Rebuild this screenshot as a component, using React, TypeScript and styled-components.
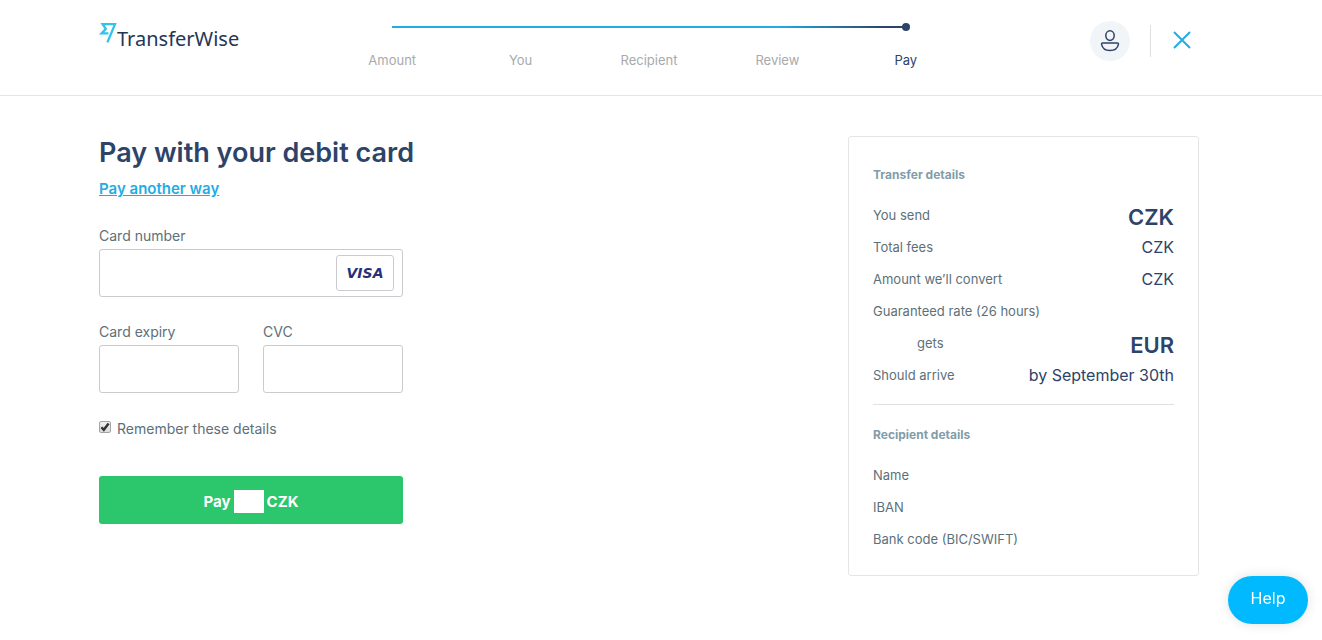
import React, { useState } from "react";
import styled, { createGlobalStyle } from "styled-components";

const color = {
  navy: "#2e4369",
  blue: "#1fade3",
  bright: "#00b9ff",
  green: "#2cc66d",
  grey: "#5d7079",
  muted: "#a8aaac",
  teal: "#829ca9",
  line: "#e2e6e8",
  field: "#c9cbce",
};

const GlobalStyle = createGlobalStyle`
  *, *::before, *::after { box-sizing: border-box; }
  body {
    margin: 0;
    background: #fff;
    color: ${color.navy};
    font-family: Inter, "Liberation Sans", sans-serif;
    font-size: 14px;
    line-height: 24px;
  }
  h1, h2, dl, dd, ol { margin: 0; padding: 0; }
  button, input { font-family: inherit; }
`;

const Gutter = styled.div`
  padding: 0 36px 0 12px;
`;

const Container = styled.div`
  max-width: 1100px;
  margin: 0 auto;
`;

const Header = styled.header`
  border-bottom: 1px solid ${color.line};
`;

const HeaderRow = styled(Container)`
  display: grid;
  grid-template-columns: 1fr minmax(0, 642px) 1fr;
  min-height: 95px;
`;

const Logo = styled.a`
  display: flex;
  align-items: flex-start;
  height: 32px;
  margin-top: 22px;
  color: #253655;
  text-decoration: none;
`;

const LogoName = styled.span`
  margin-top: 5px;
  font-family: "Noto Sans", "Open Sans", sans-serif;
  font-size: 20px;
`;

const Stepper = styled.nav`
  padding-top: 23px;
`;

const Track = styled.div`
  display: flex;
  align-items: center;
  justify-content: flex-end;
  height: 8px;
  margin: 0 10%;
  background: linear-gradient(90deg, ${color.blue} 75%, ${color.navy} 96%) center / 100% 2px no-repeat;
`;

const TrackDot = styled.span`
  width: 8px;
  height: 8px;
  margin-right: -4px;
  border-radius: 50%;
  background: ${color.navy};
`;

const Steps = styled.ol`
  display: grid;
  grid-template-columns: repeat(5, 1fr);
  margin-top: 17px;
  list-style: none;
`;

const Step = styled.li<{ $current?: boolean }>`
  color: ${(p) => (p.$current ? color.navy : color.muted)};
  font-size: 13px;
  text-align: center;
`;

const Actions = styled.div`
  display: flex;
  align-items: center;
  justify-content: flex-end;
  height: 40px;
  margin-top: 21px;
`;

const UserButton = styled.button`
  display: grid;
  place-items: center;
  width: 40px;
  height: 40px;
  padding: 0;
  border: 0;
  border-radius: 50%;
  background: #f2f5f7;
`;

const Separator = styled.span`
  width: 1px;
  height: 32px;
  margin: 0 14px 0 20px;
  background: #dcdfe2;
`;

const CloseButton = styled.button`
  display: grid;
  place-items: center;
  width: 34px;
  height: 34px;
  padding: 0 0 2px;
  border: 0;
  background: none;
`;

const Page = styled(Container)`
  display: flex;
  flex-wrap: wrap;
  justify-content: space-between;
  gap: 24px;
  padding: 40px 0;
`;

const Form = styled.form`
  display: flex;
  flex-direction: column;
  width: 304px;
`;

const Title = styled.h1`
  color: ${color.navy};
  font-size: 27px;
  font-weight: 600;
  line-height: 34px;
  white-space: nowrap;
`;

const AltLink = styled.a`
  align-self: flex-start;
  margin: 7px 0 23px;
  color: ${color.blue};
  font-size: 15px;
  font-weight: 600;
  text-decoration: underline;
`;

const Field = styled.div`
  flex: 1;
  min-width: 0;
`;

const FieldRow = styled.div`
  display: flex;
  gap: 24px;
  margin-top: 23px;
`;

const Label = styled.label`
  display: block;
  margin-bottom: 1px;
  color: ${color.grey};
`;

const InputFrame = styled.div`
  display: flex;
  align-items: center;
  height: 48px;
  padding-right: 8px;
  border: 1px solid ${color.field};
  border-radius: 3px;
`;

const Input = styled.input`
  flex: 1;
  min-width: 0;
  height: 100%;
  padding: 0 0 0 16px;
  border: 0;
  outline: 0;
  background: transparent;
  color: ${color.navy};
  font-size: 16px;
`;

const CardBrand = styled.span`
  display: grid;
  place-items: center;
  width: 58px;
  height: 36px;
  border: 1px solid ${color.field};
  border-radius: 3px;
  color: #2a2f7c;
  font-family: "DejaVu Sans", sans-serif;
  font-size: 14px;
  font-style: italic;
  font-weight: 700;
`;

const Remember = styled.label`
  display: flex;
  gap: 6px;
  margin: 24px 0 35px;
  color: ${color.grey};
`;

const TickBox = styled.span`
  display: grid;
  width: 12px;
  height: 12px;
  margin-top: 4px;

  > * { grid-area: 1 / 1; }
  svg { pointer-events: none; }
`;

const Tick = styled.input`
  appearance: none;
  width: 12px;
  height: 12px;
  margin: 0;
  border: 1px solid #a3a3a3;
  border-radius: 2px;
  background: linear-gradient(#f0f0f0, #dcdcdc);
`;

const PayButton = styled.button`
  display: flex;
  align-items: center;
  justify-content: center;
  gap: 3px;
  height: 48px;
  padding: 3px 0 0;
  border: 0;
  border-radius: 3px;
  background: ${color.green};
  color: #fff;
  font-size: 15px;
  font-weight: 700;
`;

const HiddenAmount = styled.span`
  width: 30px;
  height: 23px;
  background: #fff;
`;

const Summary = styled.aside`
  width: 351px;
  padding: 25px 24px 21px;
  border: 1px solid ${color.line};
  border-radius: 3px;
`;

const SummaryTitle = styled.h2`
  margin-bottom: 10px;
  color: ${color.teal};
  font-size: 12px;
  font-weight: 700;
  line-height: 26px;
`;

const Row = styled.div<{ $indent?: boolean }>`
  display: flex;
  justify-content: space-between;
  height: 32px;
  padding-left: ${(p) => (p.$indent ? 44 : 0)}px;
`;

const Term = styled.dt`
  color: ${color.grey};
  font-size: 13px;
  line-height: 34px;
`;

const Value = styled.dd<{ $large?: boolean }>`
  font-size: ${(p) => (p.$large ? 22 : 16)}px;
  font-weight: ${(p) => (p.$large ? 600 : 400)};
  line-height: ${(p) => (p.$large ? 38 : 34)}px;
`;

const Divider = styled.hr`
  height: 1px;
  margin: 14px 0 17px;
  border: 0;
  background: #dfe2e5;
`;

const HelpButton = styled.button`
  position: fixed;
  right: 14px;
  bottom: 16px;
  width: 80px;
  height: 48px;
  padding: 0 0 4px;
  border: 0;
  border-radius: 24px;
  background: ${color.bright};
  box-shadow: 0 0 12px rgba(0, 0, 0, 0.12);
  color: #fff;
  font-size: 16px;
`;

const steps = ["Amount", "You", "Recipient", "Review", "Pay"];

const transfer = [
  { term: "You send", value: "CZK", large: true },
  { term: "Total fees", value: "CZK" },
  { term: "Amount we’ll convert", value: "CZK" },
  { term: "Guaranteed rate (26 hours)", value: "" },
  { term: "gets", value: "EUR", large: true, indent: true },
  { term: "Should arrive", value: "by September 30th" },
];

const recipient = ["Name", "IBAN", "Bank code (BIC/SWIFT)"];

export default function App() {
  const [remember, setRemember] = useState(true);

  return (
    <>
      <GlobalStyle />
      <Header>
        <Gutter>
          <HeaderRow>
            <Logo href="#">
              <svg width="18" height="22" viewBox="0 0 18 22" fill="none" stroke="#2fc4ee" strokeWidth="2.3">
                <path d="M8.4 20.4 L16 2.2 H3.6 L6.8 6.8 L2.6 11.4 H9.4" />
              </svg>
              <LogoName>TransferWise</LogoName>
            </Logo>
            <Stepper aria-label="Progress">
              <Track>
                <TrackDot />
              </Track>
              <Steps>
                {steps.map((s) => (
                  <Step key={s} $current={s === "Pay"}>
                    {s}
                  </Step>
                ))}
              </Steps>
            </Stepper>
            <Actions>
              <UserButton type="button" aria-label="Account">
                <svg width="20" height="22" viewBox="0 0 20 22" fill="none" stroke={color.navy} strokeWidth="1.5">
                  <ellipse cx="10" cy="5.6" rx="4.2" ry="4.8" />
                  <path d="M2.6 13 H17.4 Q18.7 13 18.4 14.4 C17.6 18.2 14.2 20.6 10 20.6 C5.8 20.6 2.4 18.2 1.6 14.4 Q1.3 13 2.6 13 Z" />
                </svg>
              </UserButton>
              <Separator />
              <CloseButton type="button" aria-label="Close">
                <svg width="18" height="18" viewBox="0 0 18 18" fill="none" stroke={color.blue} strokeWidth="2">
                  <path d="M1 1 L17 17 M17 1 L1 17" />
                </svg>
              </CloseButton>
            </Actions>
          </HeaderRow>
        </Gutter>
      </Header>
      <Gutter as="main">
        <Page>
          <Form onSubmit={(e) => e.preventDefault()}>
            <Title>Pay with your debit card</Title>
            <AltLink href="#">Pay another way</AltLink>
            <div>
              <Label htmlFor="number">Card number</Label>
              <InputFrame>
                <Input id="number" inputMode="numeric" />
                <CardBrand>VISA</CardBrand>
              </InputFrame>
            </div>
            <FieldRow>
              <Field>
                <Label htmlFor="expiry">Card expiry</Label>
                <InputFrame>
                  <Input id="expiry" />
                </InputFrame>
              </Field>
              <Field>
                <Label htmlFor="cvc">CVC</Label>
                <InputFrame>
                  <Input id="cvc" />
                </InputFrame>
              </Field>
            </FieldRow>
            <Remember>
              <TickBox>
                <Tick type="checkbox" checked={remember} onChange={(e) => setRemember(e.target.checked)} />
                {remember && (
                  <svg width="12" height="12" viewBox="0 0 12 12" fill="none" stroke="#333" strokeWidth="2.4">
                    <path d="M2.4 6.2 L4.8 8.8 L9.6 2.6" />
                  </svg>
                )}
              </TickBox>
              Remember these details
            </Remember>
            <PayButton type="submit">
              <span>Pay</span>
              <HiddenAmount />
              <span>CZK</span>
            </PayButton>
          </Form>
          <Summary>
            <SummaryTitle>Transfer details</SummaryTitle>
            <dl>
              {transfer.map((r) => (
                <Row key={r.term} $indent={r.indent}>
                  <Term>{r.term}</Term>
                  <Value $large={r.large}>{r.value}</Value>
                </Row>
              ))}
            </dl>
            <Divider />
            <SummaryTitle>Recipient details</SummaryTitle>
            <dl>
              {recipient.map((term) => (
                <Row key={term}>
                  <Term>{term}</Term>
                  <Value />
                </Row>
              ))}
            </dl>
          </Summary>
        </Page>
      </Gutter>
      <HelpButton type="button">Help</HelpButton>
    </>
  );
}
